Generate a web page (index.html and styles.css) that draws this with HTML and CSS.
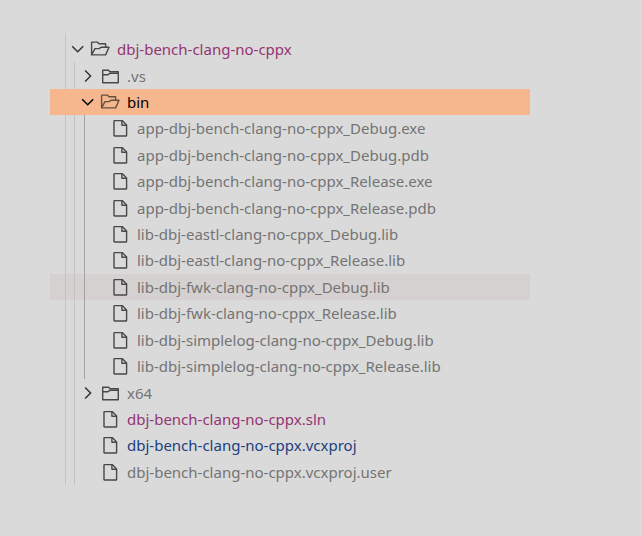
FILE: index.html
```html
<!DOCTYPE html>
<html lang="en">
<head>
<meta charset="utf-8">
<title>Explorer</title>
<link rel="stylesheet" href="styles.css">
</head>
<body>
<svg class="symbols" aria-hidden="true">
  <symbol id="down" viewBox="0 0 16 16"><path d="M2.2 5.2 7.7 10.8 13.2 5.2"/></symbol>
  <symbol id="right" viewBox="0 0 16 16"><path d="M5.1 2.5 10.6 8 5.1 13.5"/></symbol>
  <symbol id="folder" viewBox="0 0 20 20"><path d="M2.7 4.2H8.5L10 5.8H18.3V16.8H2.7ZM2.7 8.7H8L10 7.4H18.3"/></symbol>
  <symbol id="open" viewBox="0 0 20 20"><path d="M1.6 15.9V3.1H7.3L9 4.8H15.6V8.3M1.6 15.9 5 9.6H9.2L11 8.3H19L15.6 15.9Z"/></symbol>
  <symbol id="file" viewBox="0 0 20 20"><path d="M4.6 2.6H12.2L16.6 7V17.4Q16.6 18 16 18H4.6Q4 18 4 17.4V3.2Q4 2.6 4.6 2.6Z"/><path d="M11.9 2.6V7.3H16.6"/></symbol>
</svg>
<ul class="tree" role="tree" aria-label="Files">
  <li class="row added" role="treeitem" aria-level="1" aria-expanded="true"><svg class="chevron"><use href="#down"/></svg><svg class="icon"><use href="#open"/></svg><span class="name">dbj-bench-clang-no-cppx</span></li>
  <li class="row" role="treeitem" aria-level="2" aria-expanded="false"><i class="guide"></i><svg class="chevron"><use href="#right"/></svg><svg class="icon"><use href="#folder"/></svg><span class="name">.vs</span></li>
  <li class="row selected" role="treeitem" aria-level="2" aria-expanded="true" aria-selected="true"><i class="guide"></i><svg class="chevron"><use href="#down"/></svg><svg class="icon"><use href="#open"/></svg><span class="name">bin</span></li>
  <li class="row" role="treeitem" aria-level="3"><i class="guide"></i><i class="guide active"></i><span class="chevron"></span><svg class="icon"><use href="#file"/></svg><span class="name">app-dbj-bench-clang-no-cppx_Debug.exe</span></li>
  <li class="row" role="treeitem" aria-level="3"><i class="guide"></i><i class="guide active"></i><span class="chevron"></span><svg class="icon"><use href="#file"/></svg><span class="name">app-dbj-bench-clang-no-cppx_Debug.pdb</span></li>
  <li class="row" role="treeitem" aria-level="3"><i class="guide"></i><i class="guide active"></i><span class="chevron"></span><svg class="icon"><use href="#file"/></svg><span class="name">app-dbj-bench-clang-no-cppx_Release.exe</span></li>
  <li class="row" role="treeitem" aria-level="3"><i class="guide"></i><i class="guide active"></i><span class="chevron"></span><svg class="icon"><use href="#file"/></svg><span class="name">app-dbj-bench-clang-no-cppx_Release.pdb</span></li>
  <li class="row" role="treeitem" aria-level="3"><i class="guide"></i><i class="guide active"></i><span class="chevron"></span><svg class="icon"><use href="#file"/></svg><span class="name">lib-dbj-eastl-clang-no-cppx_Debug.lib</span></li>
  <li class="row" role="treeitem" aria-level="3"><i class="guide"></i><i class="guide active"></i><span class="chevron"></span><svg class="icon"><use href="#file"/></svg><span class="name">lib-dbj-eastl-clang-no-cppx_Release.lib</span></li>
  <li class="row hovered" role="treeitem" aria-level="3"><i class="guide"></i><i class="guide active"></i><span class="chevron"></span><svg class="icon"><use href="#file"/></svg><span class="name">lib-dbj-fwk-clang-no-cppx_Debug.lib</span></li>
  <li class="row" role="treeitem" aria-level="3"><i class="guide"></i><i class="guide active"></i><span class="chevron"></span><svg class="icon"><use href="#file"/></svg><span class="name">lib-dbj-fwk-clang-no-cppx_Release.lib</span></li>
  <li class="row" role="treeitem" aria-level="3"><i class="guide"></i><i class="guide active"></i><span class="chevron"></span><svg class="icon"><use href="#file"/></svg><span class="name">lib-dbj-simplelog-clang-no-cppx_Debug.lib</span></li>
  <li class="row" role="treeitem" aria-level="3"><i class="guide"></i><i class="guide active"></i><span class="chevron"></span><svg class="icon"><use href="#file"/></svg><span class="name">lib-dbj-simplelog-clang-no-cppx_Release.lib</span></li>
  <li class="row" role="treeitem" aria-level="2" aria-expanded="false"><i class="guide"></i><svg class="chevron"><use href="#right"/></svg><svg class="icon"><use href="#folder"/></svg><span class="name">x64</span></li>
  <li class="row added" role="treeitem" aria-level="2"><i class="guide"></i><span class="chevron"></span><svg class="icon"><use href="#file"/></svg><span class="name">dbj-bench-clang-no-cppx.sln</span></li>
  <li class="row project" role="treeitem" aria-level="2"><i class="guide"></i><span class="chevron"></span><svg class="icon"><use href="#file"/></svg><span class="name">dbj-bench-clang-no-cppx.vcxproj</span></li>
  <li class="row" role="treeitem" aria-level="2"><i class="guide"></i><span class="chevron"></span><svg class="icon"><use href="#file"/></svg><span class="name">dbj-bench-clang-no-cppx.vcxproj.user</span></li>
</ul>
</body>
</html>
```
FILE: styles.css
```css
* { box-sizing: border-box; }

body {
  display: flex;
  min-height: 100vh;
  margin: 0;
  padding: 33px 112px 51px 50px;
  background: #dadada;
  color: #747474;
  font: 15px/24px "Noto Sans", "Open Sans", sans-serif;
}

.symbols {
  position: absolute;
  width: 0;
  height: 0;
}

.tree {
  display: grid;
  flex: 1;
  grid-auto-rows: 1fr;
  min-width: 0;
  margin: 0;
  padding: 3px 0 0;
  list-style: none;
  background: linear-gradient(#c3c3c3, #c3c3c3) 15px 0 / 1px 100% no-repeat;
}

.row {
  display: flex;
  align-items: center;
  min-width: 0;
  padding-left: 24px;
  white-space: nowrap;
}

.guide {
  flex: none;
  align-self: stretch;
  width: 10px;
  border-left: 1px solid #c3c3c3;
}

.guide.active { border-color: #a2a2a2; }

.chevron {
  flex: none;
  width: 16px;
  height: 16px;
  margin: 0 4px 0 -4px;
  fill: none;
  stroke: #333;
  stroke-width: 1.5;
}

.icon {
  flex: none;
  width: 20px;
  height: 20px;
  margin-right: 7px;
  fill: none;
  stroke: #484848;
  stroke-width: 1.4;
  stroke-linejoin: round;
}

.added { color: #953474; }
.project { color: #1b4080; }

.selected {
  background: #f6b78e;
  color: #000;
}

.selected .guide { border-color: transparent; }
.selected .chevron { stroke: #000; }
.selected .icon { stroke: #65503f; }

.hovered { background: rgba(200, 185, 180, 0.25); }
```
